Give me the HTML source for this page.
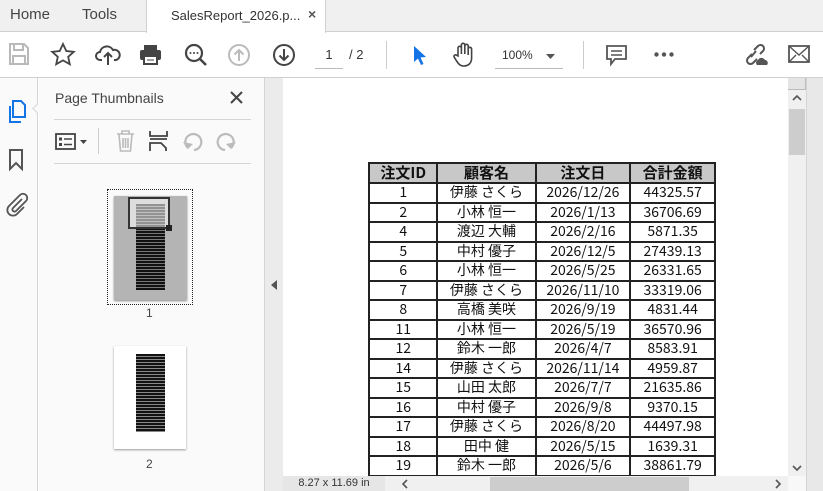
<!DOCTYPE html>
<html><head><meta charset="utf-8"><style>
*{margin:0;padding:0;box-sizing:border-box}
body{width:823px;height:491px;overflow:hidden;position:relative;background:#fff;font-family:"Liberation Sans","Noto Sans CJK JP",sans-serif;color:#333}
.a{position:absolute}
svg{position:absolute;overflow:visible}
table{border-collapse:collapse;font-family:"Noto Sans CJK JP","Liberation Sans",sans-serif;font-size:14px;color:#111}
td{border:2px solid #222;text-align:center;height:19.5px;line-height:15px;padding:0}
th{border:2px solid #222;background:#c8c8c8;height:20px;font-weight:bold;font-size:15px;line-height:16px}
</style></head><body>
<div class="a" style="left:0;top:0;width:823px;height:32px;background:#f0f0f0;border-bottom:1px solid #d0d0d0"></div>
<div class="a" style="left:10px;top:6px;font-size:15px;color:#444">Home</div>
<div class="a" style="left:82px;top:6px;font-size:15px;color:#444">Tools</div>
<div class="a" style="left:146px;top:0;width:180px;height:33px;background:#fff;border-left:1px solid #d0d0d0;border-right:1px solid #d0d0d0"></div>
<div class="a" style="left:171px;top:8px;font-size:13px;color:#333">SalesReport_2026.p...</div>
<div class="a" style="left:308px;top:6px;font-size:14px;color:#555;font-weight:bold">×</div>
<div class="a" style="left:0;top:77px;width:823px;height:1px;background:#d0d0d0"></div>
<svg style="left:9px;top:43px" width="20" height="22"><path d="M1 1h14l4 4v16H1z M5 1v6h9V1 M4 13h12v8H4z" fill="none" stroke="#b9b9b9" stroke-width="2"/></svg>
<svg style="left:51px;top:43px" width="24" height="23"><path d="M12 1l3.3 7 7.5.8-5.6 5 1.6 7.4L12 17.4 5.2 21.2l1.6-7.4-5.6-5 7.5-.8z" fill="none" stroke="#444" stroke-width="1.8"/></svg>
<svg style="left:95px;top:44px" width="26" height="22"><path d="M7 16H5a4 4 0 0 1 0-8 7 7 0 0 1 13-2 5 5 0 0 1 3 10h-2 M13 21V9 M9 13l4-4 4 4" fill="none" stroke="#444" stroke-width="2"/></svg>
<svg style="left:139px;top:44px" width="23" height="21"><rect x="5" y="1" width="13" height="5" fill="#444"/><rect x="1" y="6" width="21" height="10" rx="2" fill="#444"/><rect x="5" y="12" width="13" height="8" fill="#fff" stroke="#444" stroke-width="2"/><path d="M8 16h7" stroke="#444"/></svg>
<svg style="left:184px;top:43px" width="24" height="24"><circle cx="10" cy="10" r="8" fill="none" stroke="#444" stroke-width="2.2"/><path d="M16 16l6 6" stroke="#444" stroke-width="2.6"/><circle cx="6.5" cy="10" r="1" fill="#444"/><circle cx="10" cy="10" r="1" fill="#444"/><circle cx="13.5" cy="10" r="1" fill="#444"/></svg>
<svg style="left:228px;top:44px" width="22" height="22"><circle cx="11" cy="11" r="10" fill="none" stroke="#bbb" stroke-width="2"/><path d="M11 17V6 M6.5 10.5 11 6l4.5 4.5" fill="none" stroke="#bbb" stroke-width="2"/></svg>
<svg style="left:273px;top:44px" width="22" height="22"><circle cx="11" cy="11" r="10" fill="none" stroke="#444" stroke-width="2"/><path d="M11 5v11 M6.5 11.5 11 16l4.5-4.5" fill="none" stroke="#444" stroke-width="2"/></svg>
<div class="a" style="left:315px;top:47px;width:28px;height:22px;border-bottom:1px solid #bbb;font-size:13px;text-align:center;color:#333">1</div>
<div class="a" style="left:349px;top:47px;font-size:13px;color:#333">/ 2</div>
<div class="a" style="left:386px;top:41px;width:1px;height:28px;background:#ccc"></div>
<svg style="left:413px;top:45px" width="14" height="20"><path d="M1 1l12 11-5.5.5 3 6.5-2.5 1-3-6.5L1 17z" fill="#1473e6"/></svg>
<svg style="left:452px;top:42px" width="22" height="26"><path d="M6 14V6a1.7 1.7 0 0 1 3.4 0v6V3a1.7 1.7 0 0 1 3.4 0v9V4a1.7 1.7 0 0 1 3.4 0v9V7a1.7 1.7 0 0 1 3.4 0v9c0 5-3 8-8 8-3.5 0-5-2-7-5l-2.5-4a1.6 1.6 0 0 1 2.7-1.6z" fill="none" stroke="#444" stroke-width="1.6"/></svg>
<div class="a" style="left:495px;top:47px;width:68px;height:22px;border-bottom:1px solid #bbb"></div>
<div class="a" style="left:502px;top:48px;font-size:12px;color:#333">100%</div>
<svg style="left:546px;top:54px" width="9" height="5"><path d="M0 0h9L4.5 5z" fill="#555"/></svg>
<div class="a" style="left:583px;top:41px;width:1px;height:28px;background:#ccc"></div>
<svg style="left:606px;top:45px" width="21" height="21"><path d="M1 1h19v13H9l-4 5v-5H1z" fill="none" stroke="#555" stroke-width="1.8"/><path d="M5 6h11M5 10h11" stroke="#555" stroke-width="1.4"/></svg>
<svg style="left:654px;top:52px" width="20" height="5"><circle cx="2.5" cy="2.5" r="2.2" fill="#555"/><circle cx="10" cy="2.5" r="2.2" fill="#555"/><circle cx="17.5" cy="2.5" r="2.2" fill="#555"/></svg>
<svg style="left:743px;top:44px" width="26" height="22"><path d="M9 10l-4 4a3.5 3.5 0 0 0 5 5l4-4 M8 13l5-6 M11 6l4-4a3.5 3.5 0 0 1 5 5l-3 3" fill="none" stroke="#555" stroke-width="2"/><path d="M14 21a3 3 0 0 1 1-5 4 4 0 0 1 7 0 3 3 0 0 1 2 5z" fill="#555"/></svg>
<svg style="left:788px;top:45px" width="22" height="18"><rect x="1" y="1" width="20" height="16" fill="none" stroke="#555" stroke-width="1.8"/><path d="M1 1l10 9 10-9 M1 17l7-7 M21 17l-7-7" fill="none" stroke="#555" stroke-width="1.4"/></svg>
<div class="a" style="left:0;top:78px;width:38px;height:413px;background:#fafafa;border-right:1px solid #d5d5d5"></div>
<svg style="left:8px;top:100px" width="18" height="24"><path d="M5 1h8l4 4v12H5z" fill="none" stroke="#1473e6" stroke-width="2"/><path d="M2 6v16h11" fill="none" stroke="#1473e6" stroke-width="2"/></svg>
<div class="a" style="left:38px;top:105px;width:7px;height:7px;background:#fafafa;border-left:1px solid #d5d5d5;border-bottom:1px solid #d5d5d5;transform:rotate(45deg) translate(-3px,3px)"></div>
<svg style="left:9px;top:149px" width="14" height="22"><path d="M1 1h12v19l-6-6-6 6z" fill="none" stroke="#555" stroke-width="2"/></svg>
<svg style="left:6px;top:193px" width="22" height="24"><path d="M16 6l-9 9a2 2 0 0 0 3 3l10-10a4 4 0 0 0-6-6L3 13a5.5 5.5 0 0 0 8 8l7-7" fill="none" stroke="#555" stroke-width="1.8"/></svg>
<div class="a" style="left:39px;top:78px;width:226px;height:413px;background:#fafafa;border-right:1px solid #d5d5d5"></div>
<div class="a" style="left:55px;top:90px;font-size:14px;color:#444">Page Thumbnails</div>
<svg style="left:230px;top:91px" width="13" height="13"><path d="M1 1l11 11M12 1L1 12" stroke="#444" stroke-width="2"/></svg>
<div class="a" style="left:54px;top:119px;width:197px;height:1px;background:#d5d5d5"></div>
<div class="a" style="left:54px;top:163px;width:197px;height:1px;background:#d5d5d5"></div>
<svg style="left:55px;top:133px" width="36" height="18"><rect x="1" y="1" width="19" height="15" fill="none" stroke="#444" stroke-width="1.8"/><rect x="4" y="4.5" width="3" height="3" fill="#444"/><rect x="4" y="10" width="3" height="3" fill="#444"/><path d="M9 6h8M9 11.5h8" stroke="#444" stroke-width="1.6"/><path d="M25 7h7l-3.5 4z" fill="#444"/></svg>
<div class="a" style="left:98px;top:128px;width:1px;height:26px;background:#ccc"></div>
<svg style="left:116px;top:130px" width="19" height="22"><path d="M1 4h17 M6 4V1h7v3 M3 4l1.5 17h10L16 4 M7 8v10M9.5 8v10M12 8v10" fill="none" stroke="#bbb" stroke-width="1.6"/></svg>
<svg style="left:149px;top:130px" width="20" height="22"><path d="M1 1v5h17V1 M1 9h17 M1 21v-8h11l5 5v3" fill="none" stroke="#444" stroke-width="1.8"/></svg>
<svg style="left:182px;top:131px" width="21" height="20"><path d="M6 17a8 8 0 1 1 6 2" fill="none" stroke="#bbb" stroke-width="2.2"/><path d="M1 11l5 7 5-5z" fill="#bbb"/></svg>
<svg style="left:216px;top:131px" width="21" height="20"><path d="M15 17a8 8 0 1 0-6 2" fill="none" stroke="#bbb" stroke-width="2.2"/><path d="M20 11l-5 7-5-5z" fill="#bbb"/></svg>
<div class="a" style="left:107px;top:189px;width:86px;height:116px;border:1px dotted #222"></div>
<div class="a" style="left:114px;top:196px;width:73px;height:104px;background:#b4b4b4;box-shadow:0 1px 2px #888"></div>
<div class="a" style="left:136px;top:204px;width:29px;height:86px;background:repeating-linear-gradient(#111 0 2px,#777 2px 3px)"></div>
<div class="a" style="left:128px;top:197px;width:42px;height:32px;border:2px solid #333;background:rgba(255,255,255,.55)"></div>
<div class="a" style="left:166px;top:225px;width:6px;height:6px;background:#222"></div>
<div class="a" style="left:146px;top:306px;font-size:12px;color:#444">1</div>
<div class="a" style="left:114px;top:346px;width:72px;height:103px;background:#fff;box-shadow:0 1px 2px #999"></div>
<div class="a" style="left:136px;top:354px;width:29px;height:78px;background:repeating-linear-gradient(#111 0 2px,#888 2px 3px)"></div>
<div class="a" style="left:146px;top:457px;font-size:12px;color:#444">2</div>
<div class="a" style="left:265px;top:78px;width:18px;height:413px;background:#ebebeb"></div>
<svg style="left:271px;top:280px" width="6" height="10"><path d="M6 0v10L0 5z" fill="#555"/></svg>
<div class="a" style="left:368px;top:162px">
<table style="width:348px">
<colgroup><col style="width:69px"><col style="width:99px"><col style="width:95px"><col style="width:85px"></colgroup>
<tr><th>注文ID</th><th>顧客名</th><th>注文日</th><th>合計金額</th></tr>
<tr><td>1</td><td>伊藤 さくら</td><td>2026/12/26</td><td>44325.57</td></tr>
<tr><td>2</td><td>小林 恒一</td><td>2026/1/13</td><td>36706.69</td></tr>
<tr><td>4</td><td>渡辺 大輔</td><td>2026/2/16</td><td>5871.35</td></tr>
<tr><td>5</td><td>中村 優子</td><td>2026/12/5</td><td>27439.13</td></tr>
<tr><td>6</td><td>小林 恒一</td><td>2026/5/25</td><td>26331.65</td></tr>
<tr><td>7</td><td>伊藤 さくら</td><td>2026/11/10</td><td>33319.06</td></tr>
<tr><td>8</td><td>高橋 美咲</td><td>2026/9/19</td><td>4831.44</td></tr>
<tr><td>11</td><td>小林 恒一</td><td>2026/5/19</td><td>36570.96</td></tr>
<tr><td>12</td><td>鈴木 一郎</td><td>2026/4/7</td><td>8583.91</td></tr>
<tr><td>14</td><td>伊藤 さくら</td><td>2026/11/14</td><td>4959.87</td></tr>
<tr><td>15</td><td>山田 太郎</td><td>2026/7/7</td><td>21635.86</td></tr>
<tr><td>16</td><td>中村 優子</td><td>2026/9/8</td><td>9370.15</td></tr>
<tr><td>17</td><td>伊藤 さくら</td><td>2026/8/20</td><td>44497.98</td></tr>
<tr><td>18</td><td>田中 健</td><td>2026/5/15</td><td>1639.31</td></tr>
<tr><td>19</td><td>鈴木 一郎</td><td>2026/5/6</td><td>38861.79</td></tr>
</table></div>
<div class="a" style="left:788px;top:78px;width:18px;height:398px;background:#f0f0f0"></div>
<div class="a" style="left:788px;top:78px;width:18px;height:12px;background:#e4e4e4;border-right:1px solid #bbb;border-bottom:1px solid #bbb"></div>
<svg style="left:793px;top:95px" width="8" height="5"><path d="M0 5l4-4 4 4" fill="none" stroke="#555" stroke-width="1.6"/></svg>
<div class="a" style="left:789px;top:109px;width:16px;height:46px;background:#cdcdcd"></div>
<svg style="left:793px;top:466px" width="8" height="5"><path d="M0 0l4 4 4-4" fill="none" stroke="#555" stroke-width="1.6"/></svg>
<div class="a" style="left:806px;top:78px;width:17px;height:413px;background:#e8e8e8;border-left:1px solid #d5d5d5"></div>
<div class="a" style="left:283px;top:476px;width:505px;height:15px;background:#f0f0f0"></div>
<div class="a" style="left:283px;top:476px;width:102px;height:15px;background:#e6e6e6;font-size:11px;line-height:15px;text-align:center;color:#333">8.27 x 11.69 in</div>
<svg style="left:402px;top:480px" width="5" height="8"><path d="M5 0L1 4l4 4" fill="none" stroke="#555" stroke-width="1.6"/></svg>
<div class="a" style="left:490px;top:477px;width:199px;height:14px;background:#cdcdcd"></div>
<svg style="left:776px;top:480px" width="5" height="8"><path d="M0 0l4 4-4 4" fill="none" stroke="#555" stroke-width="1.6"/></svg>
<div class="a" style="left:788px;top:476px;width:18px;height:15px;background:#f8f8f8"></div>
</body></html>
